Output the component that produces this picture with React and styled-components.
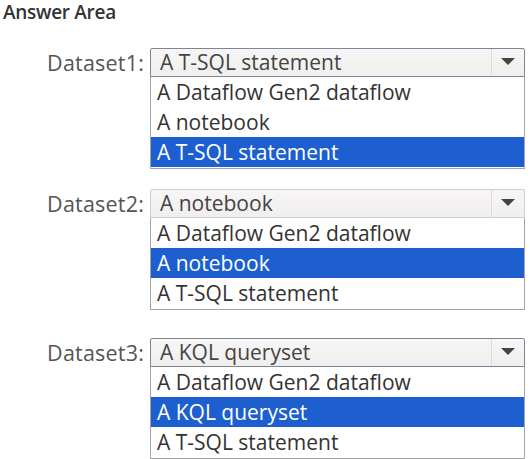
import styled, { createGlobalStyle } from "styled-components";

const GlobalStyle = createGlobalStyle`
  body {
    margin: 0;
    background: #fff;
    font-family: "Open Sans", "Noto Sans", sans-serif;
  }
`;

const Page = styled.div`
  width: 530px;
  height: 459px;
  overflow: hidden;
  box-sizing: border-box;
  padding: 0 5px 0 3px;
`;

const Title = styled.h1`
  margin: 0;
  height: 24px;
  font-size: 19px;
  line-height: 24px;
  font-weight: 600;
  color: #333;
  letter-spacing: -0.3px;
`;

const Group = styled.div`
  display: flex;
  align-items: flex-start;
  margin-top: ${(p) => p.$top}px;
`;

const Label = styled.div`
  width: 147px;
  flex-shrink: 0;
  text-align: right;
  padding-right: 6px;
  box-sizing: border-box;
  height: 29px;
  line-height: 29px;
  font-size: 21.5px;
  letter-spacing: 0.2px;
  color: #555;
`;

const Dropdown = styled.div`
  flex: 1;
  display: flex;
  flex-direction: column;
`;

const Header = styled.div`
  display: flex;
  height: 29px;
  box-sizing: border-box;
  border: 1px solid ${(p) => (p.$focused ? "#7d8596" : "#cfcfcf")};
  border-radius: 2px 2px 0 0;
  background: linear-gradient(#f7f5f5, #f1eeee);
`;

const HeaderText = styled.div`
  flex: 1;
  padding-left: 9px;
  line-height: 27px;
  font-size: 21px;
  color: #444;
  white-space: nowrap;
`;

const ArrowBox = styled.div`
  width: 32px;
  display: flex;
  align-items: center;
  justify-content: center;
  border-left: 1px solid #dcdcdc;
`;

const Arrow = styled.div`
  width: 0;
  height: 0;
  border-left: 7px solid transparent;
  border-right: 7px solid transparent;
  border-top: 7px solid #444;
  margin-top: -3px;
`;

const List = styled.div`
  border: 1px solid #a4a4a4;
  border-top: none;
  background: #fff;
  padding-bottom: 1px;
`;

const Option = styled.div`
  height: 30px;
  line-height: 30px;
  padding-left: 6px;
  font-size: 21px;
  white-space: nowrap;
  color: ${(p) => (p.$selected ? "#fff" : "#333")};
  background: ${(p) => (p.$selected ? "#1d5fcf" : "transparent")};
`;

const options = ["A Dataflow Gen2 dataflow", "A notebook", "A T-SQL statement"];

const datasets = [
  { name: "Dataset1:", top: 24, focused: true, options, selected: 2 },
  { name: "Dataset2:", top: 20, focused: false, options, selected: 1 },
  {
    name: "Dataset3:",
    top: 28,
    focused: true,
    options: ["A Dataflow Gen2 dataflow", "A KQL queryset", "A T-SQL statement"],
    selected: 1,
  },
];

export default function App() {
  return (
    <>
      <GlobalStyle />
      <Page>
        <Title>Answer Area</Title>
        {datasets.map((d) => (
          <Group key={d.name} $top={d.top}>
            <Label>{d.name}</Label>
            <Dropdown>
              <Header $focused={d.focused}>
                <HeaderText>{d.options[d.selected]}</HeaderText>
                <ArrowBox>
                  <Arrow />
                </ArrowBox>
              </Header>
              <List>
                {d.options.map((o, i) => (
                  <Option key={o} $selected={i === d.selected}>
                    {o}
                  </Option>
                ))}
              </List>
            </Dropdown>
          </Group>
        ))}
      </Page>
    </>
  );
}
